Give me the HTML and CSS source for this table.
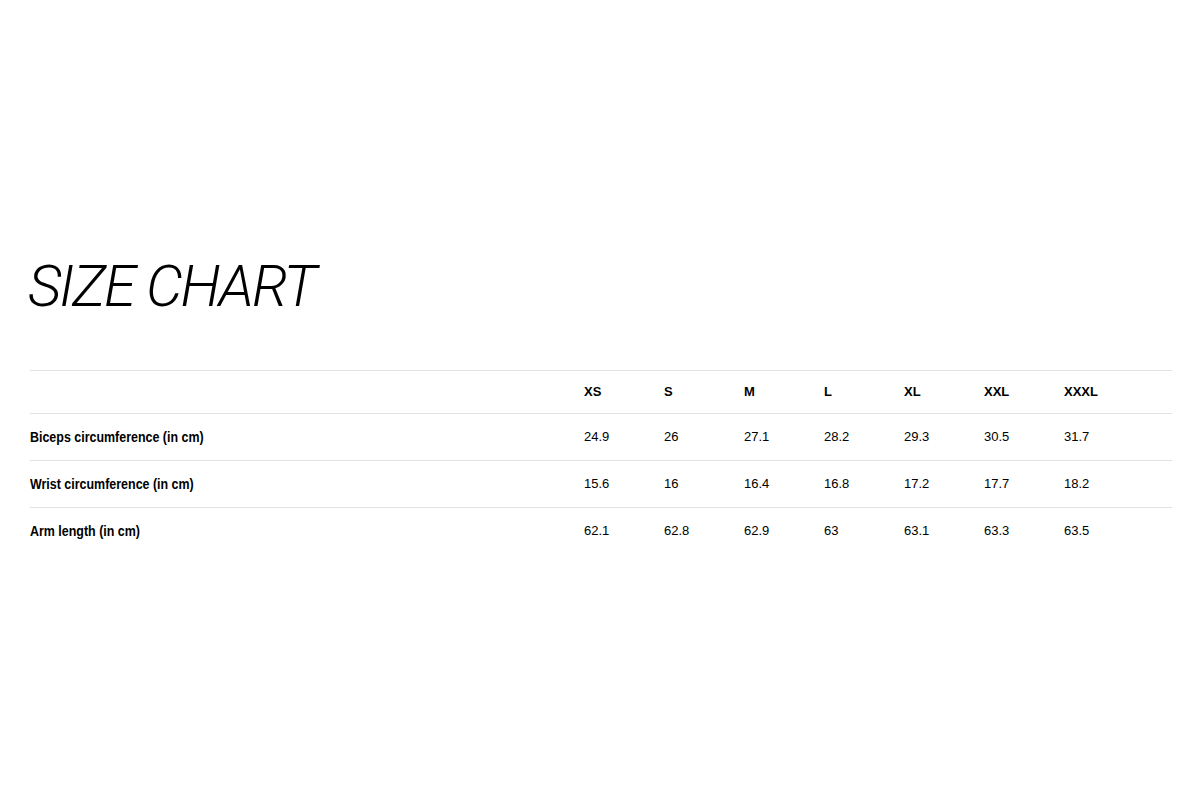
FILE: index.html
```html
<!DOCTYPE html>
<html lang="en">
<head>
<meta charset="utf-8">
<title>Size Chart</title>
<link rel="stylesheet" href="styles.css">
</head>
<body>
<main class="page">
  <h1 class="title">SIZE CHART</h1>
  <div class="chart">
    <div class="row head">
      <div class="label"></div>
      <div class="cell">XS</div><div class="cell">S</div><div class="cell">M</div><div class="cell">L</div><div class="cell">XL</div><div class="cell">XXL</div><div class="cell">XXXL</div><div class="cell"></div>
    </div>
    <div class="row">
      <div class="label"><span class="label-text">Biceps circumference (in cm)</span></div>
      <div class="cell">24.9</div><div class="cell">26</div><div class="cell">27.1</div><div class="cell">28.2</div><div class="cell">29.3</div><div class="cell">30.5</div><div class="cell">31.7</div><div class="cell"></div>
    </div>
    <div class="row">
      <div class="label"><span class="label-text">Wrist circumference (in cm)</span></div>
      <div class="cell">15.6</div><div class="cell">16</div><div class="cell">16.4</div><div class="cell">16.8</div><div class="cell">17.2</div><div class="cell">17.7</div><div class="cell">18.2</div><div class="cell"></div>
    </div>
    <div class="row last">
      <div class="label"><span class="label-text">Arm length (in cm)</span></div>
      <div class="cell">62.1</div><div class="cell">62.8</div><div class="cell">62.9</div><div class="cell">63</div><div class="cell">63.1</div><div class="cell">63.3</div><div class="cell">63.5</div><div class="cell"></div>
    </div>
  </div>
</main>
</body>
</html>
```

FILE: styles.css
```css
html, body {
  margin: 0;
  background: #ffffff;
  color: #000000;
}
.page {
  padding: 252px 28px 0 30px;
  font-family: "Liberation Sans", Arial, sans-serif;
}
.title {
  margin: 0 0 50px 0;
  font-family: "Roboto", "Liberation Sans", sans-serif;
  font-weight: 300;
  font-style: italic;
  font-size: 58px;
  line-height: 68px;
  letter-spacing: -2px;
  margin-left: -2px;
}
.chart {
  border-top: 1px solid #e3e3e3;
}
.row {
  box-sizing: border-box;
  display: grid;
  grid-template-columns: 554px repeat(7, 80px) 1fr;
  align-items: center;
  height: 47px;
  padding-bottom: 2px;
  border-bottom: 1px solid #e3e3e3;
  font-size: 13px;
}
.row.head {
  height: 43px;
  font-weight: bold;
}
.row.last {
  border-bottom: none;
}
.label {
  font-weight: bold;
  font-size: 15px;
}
.label-text {
  display: inline-block;
  white-space: nowrap;
  transform: scaleX(0.83);
  transform-origin: left center;
}
```
